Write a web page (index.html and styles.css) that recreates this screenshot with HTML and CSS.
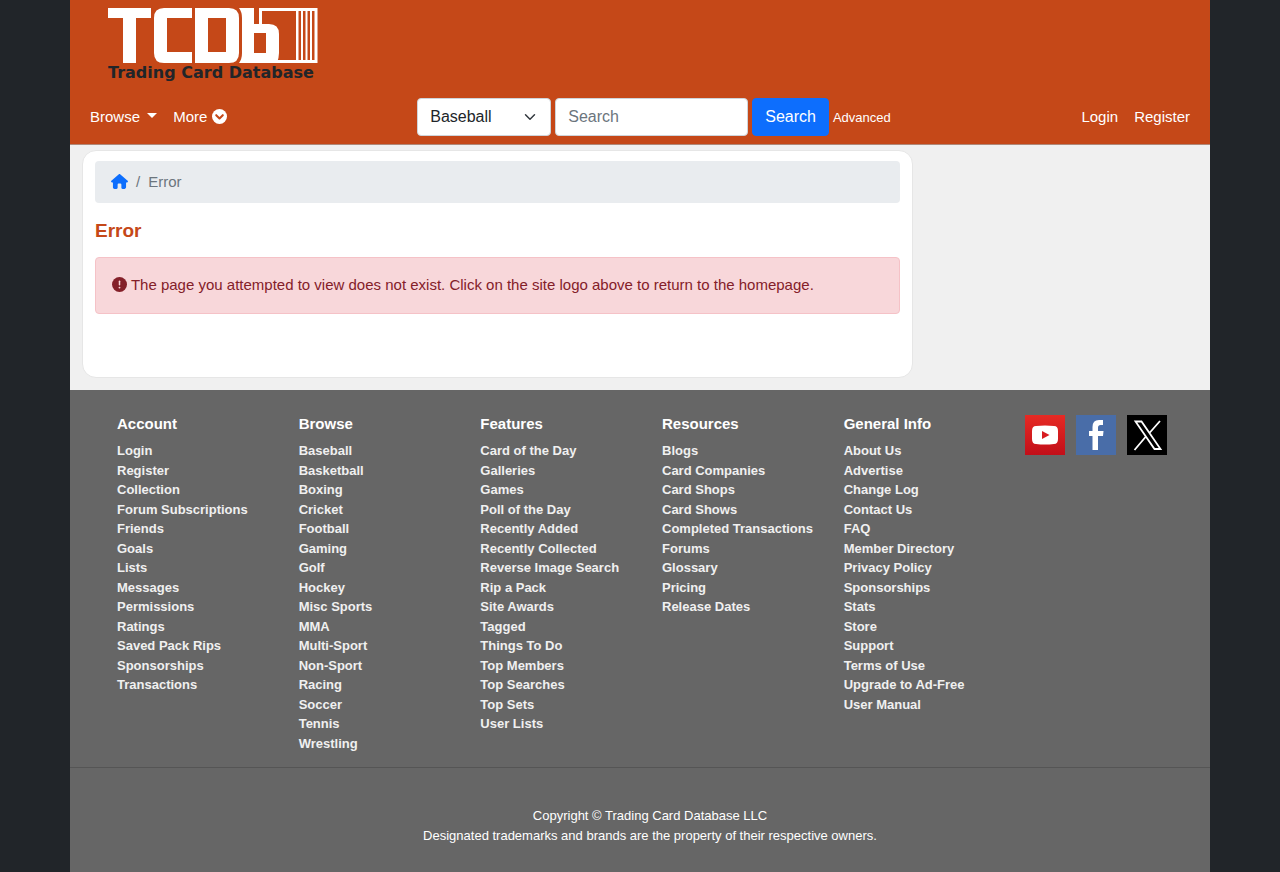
FILE: index.html
```html
<!DOCTYPE html>
<html lang="en">
<head>
<meta charset="utf-8">
<meta name="viewport" content="width=device-width, initial-scale=1">
<title>Error - Trading Card Database</title>
<link rel="stylesheet" href="styles.css">
</head>
<body>
<div class="page">
  <header class="header">
    <a class="logo" href="#" aria-label="Trading Card Database home">
      <svg width="212" height="76" viewBox="0 0 212 76">
        <g fill="#fff" fill-rule="evenodd">
          <path d="M0 0H43V10H28V55H15V10H0Z"/>
          <path d="M84 0V10H59V44H84V55H56Q46 55 46 45V10Q46 0 56 0Z"/>
          <path d="M87 0H121Q131 0 131 10V45Q131 55 121 55H87ZM100 10V44H118V10Z"/>
          <path d="M131 0H146V16H161Q171 16 171 26V45Q171 49 169 55H131Q134 51 134 45V10Q134 4 131 0ZM146 25V45H158V25Z"/>
          <path d="M151 0H209.500V55H169V52H188V3H154V17H151ZM190.500 3V52H193V3ZM195 3V52H197.500V3ZM199.500 3V52H202V3ZM204 3V52H206.500V3Z"/>
        </g>
        <text class="logo-text" x="0" y="70">Trading Card Database</text>
      </svg>
    </a>
    <nav class="navbar">
      <div class="nav-group">
        <a class="nav-link" href="#">Browse <span class="caret"></span></a>
        <a class="nav-link" href="#">More
          <svg class="icon" width="15" height="15" viewBox="0 0 16 16"><circle cx="8" cy="8" r="8" fill="#fff"/><path d="M4.5 6.6 8 10.1l3.5-3.5" fill="none" stroke="#c54818" stroke-width="2.2" stroke-linecap="round" stroke-linejoin="round"/></svg></a>
      </div>
      <form class="search">
        <select class="field sport" aria-label="Sport"><option>Baseball</option></select>
        <input class="field query" type="text" placeholder="Search" aria-label="Search">
        <button class="search-button" type="button">Search</button>
        <a class="advanced" href="#">Advanced</a>
      </form>
      <div class="nav-group">
        <a class="nav-link" href="#">Login</a>
        <a class="nav-link" href="#">Register</a>
      </div>
    </nav>
  </header>
  <main class="main">
    <section class="card">
      <nav class="breadcrumb" aria-label="Breadcrumb">
        <a class="home" href="#" aria-label="Home"><svg class="icon" width="17" height="15" viewBox="0 0 576 512"><path fill="#0d6efd" d="M575.800 255.500c0 18-15 32.100-32 32.100h-32l.7 160.200c0 35-28 64.200-56 64.200H392c-22 0-40-14-40-40V360c0-20-14-32-32-32h-64c-18 0-32 12-32 32v112c0 26-18 40-40 40h-64c-31 0-56-25-56-56V287.600H32c-18 0-32-14-32-32.100 0-9 3-17 10-24L266.400 8c7-7 15-8 22-8s15 2 21 7l255.400 224.500c8 7 12 15 11 24z"/></svg></a>
        <span>/</span>
        <span>Error</span>
      </nav>
      <h1 class="title">Error</h1>
      <div class="alert" role="alert">
        <svg class="icon" width="15" height="15" viewBox="0 0 16 16"><circle cx="8" cy="8" r="8" fill="#842029"/><path d="M8 4.600V8.300" stroke="#f8d7da" stroke-width="1.600" stroke-linecap="round"/><circle cx="8" cy="11.300" r="1" fill="#f8d7da"/></svg>
        The page you attempted to view does not exist. Click on the site logo above to return to the homepage.
      </div>
    </section>
  </main>
  <footer class="footer">
    <div class="columns">
      <section><h2 class="heading">Account</h2><ul class="links">
        <li><a href="#">Login</a></li><li><a href="#">Register</a></li><li><a href="#">Collection</a></li><li><a href="#">Forum Subscriptions</a></li><li><a href="#">Friends</a></li><li><a href="#">Goals</a></li><li><a href="#">Lists</a></li><li><a href="#">Messages</a></li><li><a href="#">Permissions</a></li><li><a href="#">Ratings</a></li><li><a href="#">Saved Pack Rips</a></li><li><a href="#">Sponsorships</a></li><li><a href="#">Transactions</a></li>
      </ul></section>
      <section><h2 class="heading">Browse</h2><ul class="links">
        <li><a href="#">Baseball</a></li><li><a href="#">Basketball</a></li><li><a href="#">Boxing</a></li><li><a href="#">Cricket</a></li><li><a href="#">Football</a></li><li><a href="#">Gaming</a></li><li><a href="#">Golf</a></li><li><a href="#">Hockey</a></li><li><a href="#">Misc Sports</a></li><li><a href="#">MMA</a></li><li><a href="#">Multi-Sport</a></li><li><a href="#">Non-Sport</a></li><li><a href="#">Racing</a></li><li><a href="#">Soccer</a></li><li><a href="#">Tennis</a></li><li><a href="#">Wrestling</a></li>
      </ul></section>
      <section><h2 class="heading">Features</h2><ul class="links">
        <li><a href="#">Card of the Day</a></li><li><a href="#">Galleries</a></li><li><a href="#">Games</a></li><li><a href="#">Poll of the Day</a></li><li><a href="#">Recently Added</a></li><li><a href="#">Recently Collected</a></li><li><a href="#">Reverse Image Search</a></li><li><a href="#">Rip a Pack</a></li><li><a href="#">Site Awards</a></li><li><a href="#">Tagged</a></li><li><a href="#">Things To Do</a></li><li><a href="#">Top Members</a></li><li><a href="#">Top Searches</a></li><li><a href="#">Top Sets</a></li><li><a href="#">User Lists</a></li>
      </ul></section>
      <section><h2 class="heading">Resources</h2><ul class="links">
        <li><a href="#">Blogs</a></li><li><a href="#">Card Companies</a></li><li><a href="#">Card Shops</a></li><li><a href="#">Card Shows</a></li><li><a href="#">Completed Transactions</a></li><li><a href="#">Forums</a></li><li><a href="#">Glossary</a></li><li><a href="#">Pricing</a></li><li><a href="#">Release Dates</a></li>
      </ul></section>
      <section><h2 class="heading">General Info</h2><ul class="links">
        <li><a href="#">About Us</a></li><li><a href="#">Advertise</a></li><li><a href="#">Change Log</a></li><li><a href="#">Contact Us</a></li><li><a href="#">FAQ</a></li><li><a href="#">Member Directory</a></li><li><a href="#">Privacy Policy</a></li><li><a href="#">Sponsorships</a></li><li><a href="#">Stats</a></li><li><a href="#">Store</a></li><li><a href="#">Support</a></li><li><a href="#">Terms of Use</a></li><li><a href="#">Upgrade to Ad-Free</a></li><li><a href="#">User Manual</a></li>
      </ul></section>
      <div class="social">
        <a href="#" aria-label="YouTube"><svg width="40" height="40" viewBox="0 0 40 40"><defs><linearGradient id="yt" x2="0" y2="1"><stop stop-color="#e62a24"/><stop offset="1" stop-color="#c20f19"/></linearGradient></defs><path fill="url(#yt)" d="M0 0H40V40H0Z"/><path fill="#fff" d="M11 11Q20 10 29 11 33 11 33 16V24Q33 29 29 29 20 30 11 29 7 29 7 24V16Q7 11 11 11Z"/><path fill="#d71c20" d="M17 16 24.500 20 17 24Z"/></svg></a>
        <a href="#" aria-label="Facebook"><svg width="40" height="40" viewBox="0 0 40 40"><path fill="#496da8" d="M0 0H40V40H0Z"/><path fill="#fff" d="M16.500 35V21H13V16H16.500V12Q16.500 5 23 5H27V10H24.500Q22 10 22 12.500V16H27.500L27 21H22V35Z"/></svg></a>
        <a href="#" aria-label="X"><svg width="40" height="40" viewBox="0 0 40 40"><path d="M0 0H40V40H0Z"/><path fill="none" stroke="#fff" stroke-width="1.800" d="M8.500 6.500H14.500L33.500 34H27.500ZM33 6 22 18.500M7.500 35 18.500 22"/></svg></a>
      </div>
    </div>
    <div class="legal">Copyright © Trading Card Database LLC<br>Designated trademarks and brands are the property of their respective owners.</div>
  </footer>
</div>
</body>
</html>
```
FILE: styles.css
```css
* { box-sizing: border-box; }
body {
  margin: 0;
  background: #212529;
  color: #212529;
  font: 15px/1.5 "Liberation Sans", Arial, sans-serif;
}
a { color: inherit; text-decoration: none; }
.page {
  display: flex;
  flex-direction: column;
  max-width: 1140px;
  min-height: 100vh;
  margin: 0 auto;
  background: #f0f0f0;
}
.header {
  padding: 8px 12px 7px;
  background: #c54818;
  border-bottom: 1px solid #b08878;
}
.logo { display: block; width: 212px; margin: 0 26px 14px; }
.logo svg { display: block; }
.logo-text { fill: #212529; font: bold 16px "DejaVu Sans", sans-serif; }
.navbar {
  display: flex;
  flex-wrap: wrap;
  align-items: center;
  justify-content: space-between;
  color: #fff;
}
.nav-group { display: flex; }
.nav-link { padding: 8px; }
.caret {
  display: inline-block;
  margin-left: 3px;
  vertical-align: 4px;
  border: 5px solid transparent;
  border-top-color: #fff;
  border-bottom: 0;
}
.icon { vertical-align: -2px; }
.search { display: flex; align-items: center; gap: 4px; }
.field, .search-button {
  height: 38px;
  padding: 0 12px;
  border: 1px solid #ced4da;
  border-radius: 4px;
  font: 16px/24px "Liberation Sans", Arial, sans-serif;
}
.field { background: #fff; color: #212529; }
.sport {
  width: 134px;
  appearance: none;
  background: #fff url("data:image/svg+xml,%3Csvg xmlns='http://www.w3.org/2000/svg' viewBox='0 0 16 16'%3E%3Cpath fill='none' stroke='%23343a40' stroke-linecap='round' stroke-linejoin='round' stroke-width='2' d='m2 5 6 6 6-6'/%3E%3C/svg%3E") no-repeat right 14px center / 12px;
}
.query { width: 193px; }
.query::placeholder { color: #6c757d; opacity: 1; }
.search-button { background: #0d6efd; border-color: #0d6efd; color: #fff; }
.advanced { font-size: 13px; }
.main { padding: 5px 12px 12px; }
.card {
  max-width: 831px;
  min-height: 228px;
  padding: 10px 12px;
  background: #fff;
  border: 1px solid #e6e6e6;
  border-radius: 14px;
}
.breadcrumb {
  display: flex;
  gap: 8px;
  padding: 10px 16px;
  background: #e9ecef;
  border-radius: 4px;
  color: #6c757d;
}
.title { margin: 13px 0 12px; color: #c54818; font-size: 19px; line-height: 29px; }
.alert {
  padding: 16px;
  background: #f8d7da;
  border: 1px solid #f5c2c7;
  border-radius: 4px;
  color: #842029;
}
.footer { flex: 1; background: #666; color: #fff; }
.columns {
  display: grid;
  grid-template-columns: repeat(6, minmax(0, 1fr));
  padding: 23px 15px 14px 35px;
  border-bottom: 1px solid #555;
}
.columns > * { padding: 0 12px; }
.heading { margin: 0 0 6px; font-size: 15px; }
.links { margin: 0; padding: 0; list-style: none; font-size: 13px; font-weight: bold; color: #f0f0f0; }
.social { display: flex; gap: 11px; margin-top: 2px; }
.social svg { display: block; }
.legal { padding: 38px 15px 28px 35px; font-size: 13px; text-align: center; }
@media (max-width: 900px) {
  .columns { grid-template-columns: repeat(3, minmax(0, 1fr)); gap: 20px 0; }
  .navbar { gap: 8px; }
}
```
